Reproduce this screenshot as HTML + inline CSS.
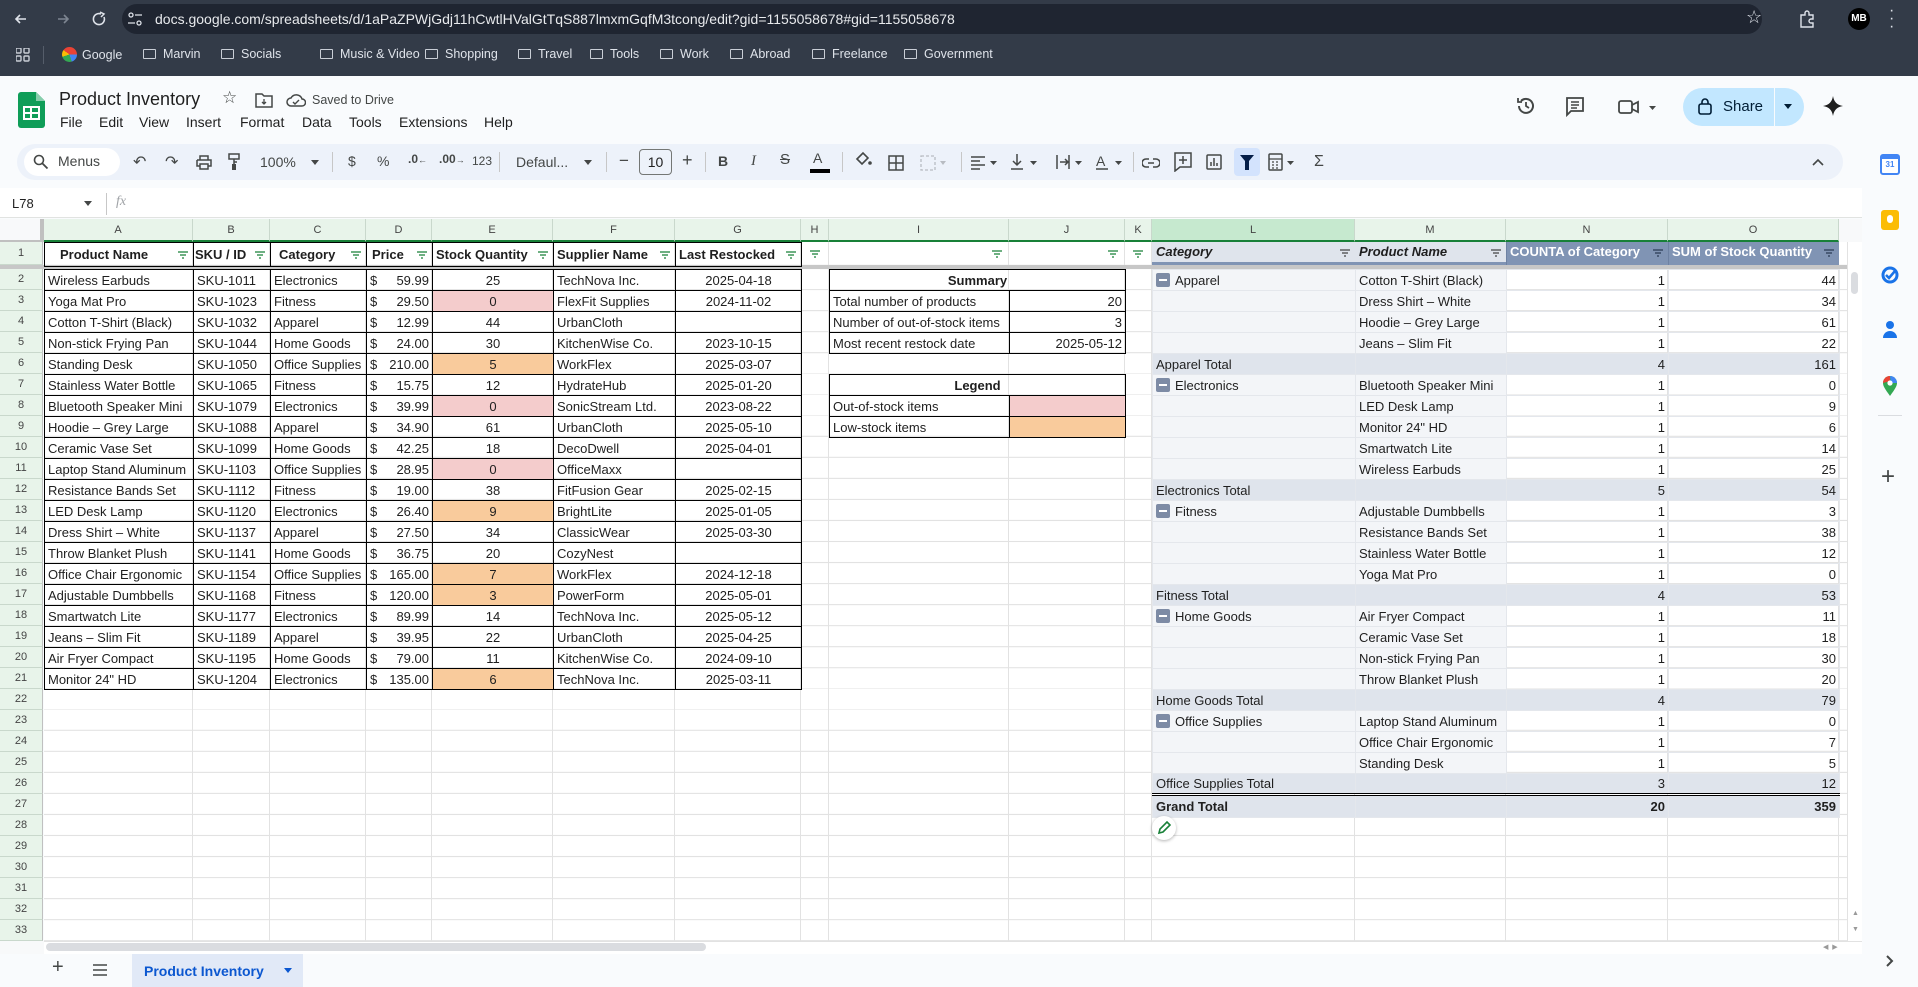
<!DOCTYPE html>
<html><head><meta charset="utf-8">
<style>
*{box-sizing:border-box;margin:0;padding:0}
body{width:1918px;height:987px;overflow:hidden;position:relative;background:#f9fbfd;font-family:"Liberation Sans",Arial,sans-serif;color:#1f1f1f}
.a{position:absolute}
.chrome{left:0;top:0;width:1918px;height:76px;background:#333b48}
.url{left:122px;top:4px;width:1640px;height:30px;background:#1f2531;border-radius:15px}
.bm{top:47px;font-size:12.5px;color:#dfe3ea;white-space:nowrap}
.fold{display:inline-block;width:13px;height:10px;border:1.5px solid #c9ced6;border-radius:1px;margin-right:7px;vertical-align:-1px}
.mn{top:114px;font-size:14px;color:#1f1f1f}
.tb{left:17px;top:144px;width:1826px;height:36px;background:#edf2fa;border-radius:18px}
.ti{top:152px;font-size:13px;color:#444746}
.sep{top:152px;width:1px;height:20px;background:#c7c7c7}
.grid{left:44px;top:242px;width:1803px;height:699px;background:#fff}
.vl{top:242px;width:1px;height:699px;background:#e2e2e2}
.colh{top:219px;height:23px;background:#e8f4ea;border-right:1px solid #c9d8cc;border-bottom:2px solid #188038;font-size:11px;color:#444;text-align:center;line-height:22px}
.rowh{left:0;width:43px;height:21px;background:#e8f4ea;border-bottom:1px solid #c9d8cc;border-right:1px solid #c0c0c0;font-size:11px;color:#444;text-align:center;line-height:20px}
table{border-collapse:collapse;table-layout:fixed;position:absolute;font-size:13px}
td{height:21px;padding:0 3px;white-space:nowrap;overflow:hidden;line-height:19px}
.dt td{border:1px solid #000}
.hd td{border:1px solid #000;font-weight:bold;height:24px;text-align:center;position:relative}
.c{text-align:center}.r{text-align:right}
.pk{background:#f4cccc}.or{background:#f9cb9c}
.pr{display:flex;justify-content:space-between}
.fi{position:absolute;right:4px;top:7px}
.pv td{border:1px solid #e4e7ec;color:#1f1f1f}
.pv .g{background:#f3f5f8}
.pv .t td{background:#dfe4ec}
.pv .gt td{background:#dfe4ec;font-weight:bold;border-top:3px double #000}
.mb{display:inline-block;width:14px;height:14px;background:#7d8ba5;border-radius:2px;vertical-align:-2px;margin-right:5px;position:relative}
.mb:after{content:"";position:absolute;left:3px;top:6px;width:8px;height:2px;background:#fff}
.side{left:1862px;top:76px;width:56px;height:911px;background:#f9fbfd}
</style></head><body>

<div class="a chrome"></div>
<div class="a url"></div>
<svg class="a" style="left:12px;top:10px" width="100" height="18"><path d="M14 9H4m4-4-4 4 4 4" stroke="#dfe3ea" stroke-width="1.6" fill="none"/><path d="M46 9h10m-4-4 4 4-4 4" stroke="#7d8591" stroke-width="1.6" fill="none"/><path d="M89 4a5.5 5.5 0 1 0 3 3" stroke="#dfe3ea" stroke-width="1.6" fill="none"/><path d="M88 2l4 2-3 3" stroke="#dfe3ea" stroke-width="1.5" fill="none"/></svg>
<svg class="a" style="left:127px;top:11px" width="16" height="16"><circle cx="4" cy="4" r="2" stroke="#dfe3ea" fill="none" stroke-width="1.3"/><path d="M8 4h7M1 12h7" stroke="#dfe3ea" stroke-width="1.3"/><circle cx="12" cy="12" r="2" stroke="#dfe3ea" fill="none" stroke-width="1.3"/></svg>
<div class="a" style="left:155px;top:11px;font-size:14px;color:#e8eaed">docs.google.com/spreadsheets/d/1aPaZPWjGdj11hCwtlHValGtTqS887lmxmGqfM3tcong/edit?gid=1155058678#gid=1155058678</div>
<div class="a" style="left:1746px;top:7px;font-size:18px;color:#dfe3ea">☆</div>
<svg class="a" style="left:1798px;top:10px" width="18" height="18"><path d="M3 5h4V3a2 2 0 0 1 4 0v2h4v4h-2a2 2 0 0 0 0 4h2v4H3z" stroke="#dfe3ea" fill="none" stroke-width="1.4"/></svg>
<div class="a" style="left:1848px;top:8px;width:22px;height:22px;border-radius:50%;background:#000;color:#fff;font-size:10px;font-weight:bold;text-align:center;line-height:22px">MB</div>
<div class="a" style="left:1889px;top:7px;color:#dfe3ea;font-size:16px;line-height:8px">·<br>·<br>·</div>

<svg class="a" style="left:16px;top:48px" width="14" height="14"><g><rect x="0" y="0" width="5" height="5" rx="1" fill="none" stroke="#c9ced6" stroke-width="1.4"/><rect x="8" y="0" width="5" height="5" rx="1" fill="none" stroke="#c9ced6" stroke-width="1.4"/><rect x="0" y="8" width="5" height="5" rx="1" fill="none" stroke="#c9ced6" stroke-width="1.4"/><rect x="8" y="8" width="5" height="5" rx="1" fill="none" stroke="#c9ced6" stroke-width="1.4"/></g></svg>
<div class="a" style="left:43px;top:46px;width:1px;height:18px;background:#555d6a"></div>
<div class="a bm" style="left:62px"><span style="display:inline-block;width:15px;height:15px;border-radius:50%;background:conic-gradient(#ea4335 0 25%,#4285f4 25% 45%,#34a853 45% 70%,#fbbc05 70% 85%,#ea4335 85%);vertical-align:-3px;margin-right:5px"></span>Google</div>
<div class="a bm" style="left:143px"><span class="fold"></span>Marvin</div>
<div class="a bm" style="left:221px"><span class="fold"></span>Socials</div>
<div class="a bm" style="left:320px"><span class="fold"></span>Music &amp; Video</div>
<div class="a bm" style="left:425px"><span class="fold"></span>Shopping</div>
<div class="a bm" style="left:518px"><span class="fold"></span>Travel</div>
<div class="a bm" style="left:590px"><span class="fold"></span>Tools</div>
<div class="a bm" style="left:660px"><span class="fold"></span>Work</div>
<div class="a bm" style="left:730px"><span class="fold"></span>Abroad</div>
<div class="a bm" style="left:812px"><span class="fold"></span>Freelance</div>
<div class="a bm" style="left:904px"><span class="fold"></span>Government</div>

<svg class="a" style="left:18px;top:92px" width="27" height="36"><path d="M0 3a3 3 0 0 1 3-3h15l9 9v24a3 3 0 0 1-3 3H3a3 3 0 0 1-3-3z" fill="#0f9d58"/><path d="M18 0v9h9z" fill="#87ceac"/><rect x="6" y="15" width="15" height="12" fill="none" stroke="#fff" stroke-width="2"/><path d="M6 21h15M13 15v12" stroke="#fff" stroke-width="2"/></svg>
<div class="a" style="left:59px;top:89px;font-size:18px;color:#1f1f1f">Product Inventory</div>
<div class="a" style="left:222px;top:88px;font-size:17px;color:#444746">☆</div>
<svg class="a" style="left:255px;top:92px" width="18" height="16"><path d="M1 2h6l2 2h8v11H1z" stroke="#444746" fill="none" stroke-width="1.5"/><path d="M9 7v5M7 10l2 2 2-2" stroke="#444746" fill="none" stroke-width="1.3"/></svg>
<svg class="a" style="left:286px;top:93px" width="20" height="15"><path d="M5 13a4 4 0 0 1 0-8 6 6 0 0 1 11 1 3.5 3.5 0 0 1 0 7z" stroke="#444746" fill="none" stroke-width="1.5"/><path d="M7 9l2 2 4-4" stroke="#444746" fill="none" stroke-width="1.4"/></svg>
<div class="a" style="left:312px;top:93px;font-size:12.5px;color:#444746">Saved to Drive</div>
<div class="a mn" style="left:60px">File</div>
<div class="a mn" style="left:99px">Edit</div>
<div class="a mn" style="left:139px">View</div>
<div class="a mn" style="left:186px">Insert</div>
<div class="a mn" style="left:240px">Format</div>
<div class="a mn" style="left:302px">Data</div>
<div class="a mn" style="left:349px">Tools</div>
<div class="a mn" style="left:399px">Extensions</div>
<div class="a mn" style="left:484px">Help</div>

<svg class="a" style="left:1515px;top:95px" width="22" height="22"><path d="M4 11a7 7 0 1 0 2-5" stroke="#444746" fill="none" stroke-width="2"/><path d="M3 3v4h4" stroke="#444746" fill="none" stroke-width="1.8"/><path d="M11 7v4l3 2" stroke="#444746" fill="none" stroke-width="1.8"/></svg>
<svg class="a" style="left:1565px;top:96px" width="20" height="22"><path d="M2 2h16v13H6l-4 4z" stroke="#444746" fill="none" stroke-width="1.8"/><path d="M6 6h8M6 9h8M6 12h6" stroke="#444746" stroke-width="1.5"/></svg>
<svg class="a" style="left:1618px;top:99px" width="44" height="16"><rect x="1" y="2" width="13" height="12" rx="2" stroke="#444746" fill="none" stroke-width="1.8"/><path d="M14 6l6-3v10l-6-3" stroke="#444746" fill="none" stroke-width="1.8"/><path d="M31 7h7l-3.5 4z" fill="#444746"/></svg>
<div class="a" style="left:1683px;top:88px;width:121px;height:38px;background:#c2e7ff;border-radius:19px"></div>
<svg class="a" style="left:1698px;top:97px" width="14" height="18"><rect x="1" y="7" width="12" height="10" rx="2" stroke="#001d35" fill="none" stroke-width="1.6"/><path d="M4 7V5a3 3 0 0 1 6 0v2" stroke="#001d35" fill="none" stroke-width="1.6"/></svg>
<div class="a" style="left:1723px;top:98px;font-size:15px;color:#001d35">Share</div>
<div class="a" style="left:1774px;top:88px;width:1px;height:38px;background:#f9fbfd"></div>
<svg class="a" style="left:1784px;top:104px" width="10" height="6"><path d="M0 0h8l-4 5z" fill="#001d35"/></svg>
<svg class="a" style="left:1823px;top:96px" width="20" height="20"><path d="M10 0C11 6 14 9 20 10 14 11 11 14 10 20 9 14 6 11 0 10 6 9 9 6 10 0z" fill="#1f1f1f"/></svg>
<div class="a" style="left:1865px;top:91px;width:32px;height:32px;border-radius:50%;background:#000;color:#fff;font-size:13px;font-weight:bold;text-align:center;line-height:32px">MB</div>

<div class="a tb"></div>
<div class="a" style="left:24px;top:148px;width:96px;height:28px;background:#fff;border-radius:14px"></div>
<svg class="a" style="left:33px;top:154px" width="16" height="16"><circle cx="6" cy="6" r="4.5" stroke="#444746" fill="none" stroke-width="1.6"/><path d="M9.5 9.5l5 5" stroke="#444746" stroke-width="1.8"/></svg>
<div class="a ti" style="left:58px;top:153px;font-size:14px">Menus</div>
<div class="a ti" style="left:133px;font-size:16px">↶</div>
<div class="a ti" style="left:165px;font-size:16px">↷</div>
<svg class="a" style="left:196px;top:155px" width="16" height="15"><path d="M4 5V1h8v4M1 5h14v6h-3M4 11H1V5" stroke="#444746" fill="none" stroke-width="1.5"/><rect x="4" y="9" width="8" height="5" stroke="#444746" fill="none" stroke-width="1.5"/></svg>
<svg class="a" style="left:228px;top:153px" width="12" height="18"><rect x="1" y="1" width="10" height="5" stroke="#444746" fill="none" stroke-width="1.5"/><path d="M6 6v3h3M6 9v8" stroke="#444746" fill="none" stroke-width="1.5"/><rect x="4" y="11" width="4" height="6" fill="#444746"/></svg>
<div class="a ti" style="left:260px;top:154px;font-size:14px">100%</div>
<svg class="a" style="left:311px;top:160px" width="8" height="5"><path d="M0 0h8l-4 5z" fill="#444746"/></svg>
<div class="a sep" style="left:332px"></div>
<div class="a ti" style="left:348px;top:153px;font-size:14px">$</div>
<div class="a ti" style="left:377px;top:153px;font-size:14px">%</div>
<div class="a ti" style="left:408px;top:152px;font-size:12px;font-weight:bold">.0<span style="font-size:9px">←</span></div>
<div class="a ti" style="left:439px;top:152px;font-size:12px;font-weight:bold">.00<span style="font-size:9px">→</span></div>
<div class="a ti" style="left:472px;top:154px;font-size:12px">123</div>
<div class="a sep" style="left:499px"></div>
<div class="a ti" style="left:516px;top:154px;font-size:14px">Defaul...</div>
<svg class="a" style="left:584px;top:160px" width="8" height="5"><path d="M0 0h8l-4 5z" fill="#444746"/></svg>
<div class="a sep" style="left:606px"></div>
<div class="a ti" style="left:619px;top:151px;font-size:17px">−</div>
<div class="a" style="left:639px;top:149px;width:33px;height:26px;border:1px solid #747775;border-radius:4px;font-size:14px;text-align:center;line-height:24px;color:#1f1f1f">10</div>
<div class="a ti" style="left:682px;top:150px;font-size:18px">+</div>
<div class="a sep" style="left:705px"></div>
<div class="a ti" style="left:718px;top:153px;font-size:14px;font-weight:bold">B</div>
<div class="a ti" style="left:751px;top:153px;font-size:15px;font-style:italic;font-family:'Liberation Serif',serif">I</div>
<div class="a ti" style="left:780px;top:151px;font-size:15px;text-decoration:line-through">S</div>
<div class="a ti" style="left:813px;top:150px;font-size:14px">A</div>
<div class="a" style="left:810px;top:169px;width:20px;height:4px;background:#000"></div>
<div class="a sep" style="left:842px"></div>
<svg class="a" style="left:854px;top:151px" width="18" height="16"><path d="M3 8l6-6 5 5-6 6z" stroke="#444746" fill="none" stroke-width="1.6"/><circle cx="16" cy="12" r="1.8" fill="#444746"/></svg>
<svg class="a" style="left:888px;top:155px" width="16" height="16"><rect x="1" y="1" width="14" height="14" stroke="#444746" fill="none" stroke-width="1.5"/><path d="M8 1v14M1 8h14" stroke="#444746" stroke-width="1.5"/></svg>
<svg class="a" style="left:920px;top:155px" width="26" height="16"><rect x="1" y="1" width="14" height="14" stroke="#b8bcc2" fill="none" stroke-width="1.3" stroke-dasharray="3 2"/><path d="M20 6h6l-3 4z" fill="#b8bcc2"/></svg>
<div class="a sep" style="left:961px"></div>
<svg class="a" style="left:970px;top:155px" width="30" height="16"><path d="M1 2h14M1 6h9M1 10h14M1 14h9" stroke="#444746" stroke-width="1.5"/><path d="M20 6h7l-3.5 4z" fill="#444746"/></svg>
<svg class="a" style="left:1010px;top:153px" width="30" height="18"><path d="M7 1v11M3 8l4 4 4-4M1 16h12" stroke="#444746" fill="none" stroke-width="1.5"/><path d="M20 8h7l-3.5 4z" fill="#444746"/></svg>
<svg class="a" style="left:1055px;top:153px" width="30" height="18"><path d="M2 2v14M5 9h8M10 6l3 3-3 3M14 2v14" stroke="#444746" fill="none" stroke-width="1.5"/><path d="M20 8h7l-3.5 4z" fill="#444746"/></svg>
<svg class="a" style="left:1095px;top:153px" width="30" height="18"><text x="1" y="13" font-size="14" fill="#444746" font-family="Liberation Sans">A</text><path d="M1 16h12" stroke="#444746" stroke-width="1.5"/><path d="M20 8h7l-3.5 4z" fill="#444746"/></svg>
<div class="a sep" style="left:1133px"></div>
<svg class="a" style="left:1142px;top:157px" width="18" height="12"><path d="M7 2H4a4 4 0 0 0 0 8h3M11 2h3a4 4 0 0 1 0 8h-3M6 6h6" stroke="#444746" fill="none" stroke-width="1.6"/></svg>
<svg class="a" style="left:1174px;top:152px" width="18" height="20"><path d="M1 1h16v14H6l-5 4z" stroke="#444746" fill="none" stroke-width="1.5"/><path d="M9 4v8M5 8h8" stroke="#444746" stroke-width="1.5"/></svg>
<svg class="a" style="left:1206px;top:154px" width="16" height="16"><rect x="1" y="1" width="14" height="14" rx="1" stroke="#444746" fill="none" stroke-width="1.5"/><path d="M5 12V8M8 12V4M11 12V9" stroke="#444746" stroke-width="1.5"/></svg>
<div class="a" style="left:1234px;top:148px;width:26px;height:28px;background:#d3e3fd;border-radius:4px"></div>
<svg class="a" style="left:1240px;top:155px" width="14" height="15"><path d="M0 0h14L9 6v9H5V6z" fill="#041e49"/></svg>
<svg class="a" style="left:1268px;top:153px" width="30" height="18"><rect x="1" y="1" width="13" height="16" rx="1" stroke="#444746" fill="none" stroke-width="1.5"/><path d="M1 6h13M4 9h2M8 9h2M4 12h2M8 12h2M4 15h2M8 15h2" stroke="#444746" stroke-width="1.3"/><path d="M19 8h7l-3.5 4z" fill="#444746"/></svg>
<div class="a ti" style="left:1314px;top:153px;font-size:16px">Σ</div>
<svg class="a" style="left:1812px;top:158px" width="12" height="8"><path d="M1 7l5-5 5 5" stroke="#444746" fill="none" stroke-width="1.6"/></svg>

<div class="a" style="left:0;top:188px;width:1862px;height:30px;background:#fff;border-bottom:1px solid #e1e3e1"></div>
<div class="a" style="left:12px;top:196px;font-size:13px;color:#1f1f1f">L78</div>
<svg class="a" style="left:84px;top:201px" width="8" height="5"><path d="M0 0h8l-4 5z" fill="#444746"/></svg>
<div class="a" style="left:106px;top:193px;width:1px;height:22px;background:#c7c7c7"></div>
<div class="a" style="left:116px;top:194px;font-size:14px;color:#a0a3a7;font-style:italic;font-family:'Liberation Serif',serif">fx</div>

<div class="a grid"></div>
<div class="a" style="left:44px;top:264px;width:1803px;height:677px;background:repeating-linear-gradient(to bottom,#e2e2e2 0 1px,transparent 1px 21px) 0 4px"></div>
<div class="a vl" style="left:192px"></div><div class="a vl" style="left:269px"></div><div class="a vl" style="left:365px"></div><div class="a vl" style="left:431px"></div><div class="a vl" style="left:552px"></div><div class="a vl" style="left:674px"></div><div class="a vl" style="left:800px"></div><div class="a vl" style="left:828px"></div><div class="a vl" style="left:1008px"></div><div class="a vl" style="left:1124px"></div><div class="a vl" style="left:1151px"></div><div class="a vl" style="left:1354px"></div><div class="a vl" style="left:1505px"></div><div class="a vl" style="left:1667px"></div><div class="a vl" style="left:1838px"></div>

<div class="a" style="left:0;top:219px;width:44px;height:23px;background:#f8f9fa;border-right:4px solid #c0c0c0;border-bottom:2px solid #c0c0c0"></div>
<div class="a colh" style="left:44px;width:149px">A</div>
<div class="a colh" style="left:193px;width:77px">B</div>
<div class="a colh" style="left:270px;width:96px">C</div>
<div class="a colh" style="left:366px;width:66px">D</div>
<div class="a colh" style="left:432px;width:121px">E</div>
<div class="a colh" style="left:553px;width:122px">F</div>
<div class="a colh" style="left:675px;width:126px">G</div>
<div class="a colh" style="left:801px;width:28px">H</div>
<div class="a colh" style="left:829px;width:180px">I</div>
<div class="a colh" style="left:1009px;width:116px">J</div>
<div class="a colh" style="left:1125px;width:27px">K</div>
<div class="a colh" style="left:1152px;width:203px;background:#c6e9cf">L</div>
<div class="a colh" style="left:1355px;width:151px">M</div>
<div class="a colh" style="left:1506px;width:162px">N</div>
<div class="a colh" style="left:1668px;width:171px">O</div>
<div class="a" style="left:1839px;top:219px;width:23px;height:23px;background:#f8f9fa"></div>

<div class="a rowh" style="top:242px;height:23px;line-height:22px">1</div>
<div class="a" style="left:0;top:265px;width:1847px;height:4px;background:#c7c7c7"></div>
<div class="a rowh" style="top:269px">2</div><div class="a rowh" style="top:290px">3</div><div class="a rowh" style="top:311px">4</div><div class="a rowh" style="top:332px">5</div><div class="a rowh" style="top:353px">6</div><div class="a rowh" style="top:374px">7</div><div class="a rowh" style="top:395px">8</div><div class="a rowh" style="top:416px">9</div><div class="a rowh" style="top:437px">10</div><div class="a rowh" style="top:458px">11</div><div class="a rowh" style="top:479px">12</div><div class="a rowh" style="top:500px">13</div><div class="a rowh" style="top:521px">14</div><div class="a rowh" style="top:542px">15</div><div class="a rowh" style="top:563px">16</div><div class="a rowh" style="top:584px">17</div><div class="a rowh" style="top:605px">18</div><div class="a rowh" style="top:626px">19</div><div class="a rowh" style="top:647px">20</div><div class="a rowh" style="top:668px">21</div><div class="a rowh" style="top:689px">22</div><div class="a rowh" style="top:710px">23</div><div class="a rowh" style="top:731px">24</div><div class="a rowh" style="top:752px">25</div><div class="a rowh" style="top:773px">26</div><div class="a rowh" style="top:794px">27</div><div class="a rowh" style="top:815px">28</div><div class="a rowh" style="top:836px">29</div><div class="a rowh" style="top:857px">30</div><div class="a rowh" style="top:878px">31</div><div class="a rowh" style="top:899px">32</div><div class="a rowh" style="top:920px">33</div>

<table class="hd" style="left:44px;top:242px;width:757px">
<colgroup><col style="width:149px"><col style="width:77px"><col style="width:96px"><col style="width:66px"><col style="width:121px"><col style="width:122px"><col style="width:126px"></colgroup>
<tr>
<td style="text-align:left;padding-left:15px">Product Name<svg class="fi" width="12" height="10"><path d="M1 2h10M3 5h6M5 8h2" stroke="#188038" stroke-width="1.3"/></svg></td>
<td style="text-align:left;padding-left:1px">SKU / ID<svg class="fi" width="12" height="10"><path d="M1 2h10M3 5h6M5 8h2" stroke="#188038" stroke-width="1.3"/></svg></td>
<td style="text-align:left;padding-left:8px">Category<svg class="fi" width="12" height="10"><path d="M1 2h10M3 5h6M5 8h2" stroke="#188038" stroke-width="1.3"/></svg></td>
<td style="text-align:left;padding-left:5px">Price<svg class="fi" width="12" height="10"><path d="M1 2h10M3 5h6M5 8h2" stroke="#188038" stroke-width="1.3"/></svg></td>
<td style="text-align:left;padding-left:3px">Stock Quantity<svg class="fi" width="12" height="10"><path d="M1 2h10M3 5h6M5 8h2" stroke="#188038" stroke-width="1.3"/></svg></td>
<td style="text-align:left;padding-left:3px">Supplier Name<svg class="fi" width="12" height="10"><path d="M1 2h10M3 5h6M5 8h2" stroke="#188038" stroke-width="1.3"/></svg></td>
<td style="text-align:left;padding-left:3px">Last Restocked<svg class="fi" width="12" height="10"><path d="M1 2h10M3 5h6M5 8h2" stroke="#188038" stroke-width="1.3"/></svg></td>
</tr></table>
<svg class="a" style="left:809px;top:249px" width="12" height="10"><path d="M1 2h10M3 5h6M5 8h2" stroke="#188038" stroke-width="1.3"/></svg>
<svg class="a" style="left:991px;top:249px" width="12" height="10"><path d="M1 2h10M3 5h6M5 8h2" stroke="#188038" stroke-width="1.3"/></svg>
<svg class="a" style="left:1107px;top:249px" width="12" height="10"><path d="M1 2h10M3 5h6M5 8h2" stroke="#188038" stroke-width="1.3"/></svg>
<svg class="a" style="left:1132px;top:249px" width="12" height="10"><path d="M1 2h10M3 5h6M5 8h2" stroke="#188038" stroke-width="1.3"/></svg>

<table class="dt" style="left:44px;top:269px;width:757px">
<colgroup><col style="width:149px"><col style="width:77px"><col style="width:96px"><col style="width:66px"><col style="width:121px"><col style="width:122px"><col style="width:126px"></colgroup>
<tr><td>Wireless Earbuds</td><td>SKU-1011</td><td>Electronics</td><td><div class="pr"><span>$</span><span>59.99</span></div></td><td class="c">25</td><td>TechNova Inc.</td><td class="c">2025-04-18</td></tr>
<tr><td>Yoga Mat Pro</td><td>SKU-1023</td><td>Fitness</td><td><div class="pr"><span>$</span><span>29.50</span></div></td><td class="c pk">0</td><td>FlexFit Supplies</td><td class="c">2024-11-02</td></tr>
<tr><td>Cotton T-Shirt (Black)</td><td>SKU-1032</td><td>Apparel</td><td><div class="pr"><span>$</span><span>12.99</span></div></td><td class="c">44</td><td>UrbanCloth</td><td class="c"></td></tr>
<tr><td>Non-stick Frying Pan</td><td>SKU-1044</td><td>Home Goods</td><td><div class="pr"><span>$</span><span>24.00</span></div></td><td class="c">30</td><td>KitchenWise Co.</td><td class="c">2023-10-15</td></tr>
<tr><td>Standing Desk</td><td>SKU-1050</td><td>Office Supplies</td><td><div class="pr"><span>$</span><span>210.00</span></div></td><td class="c or">5</td><td>WorkFlex</td><td class="c">2025-03-07</td></tr>
<tr><td>Stainless Water Bottle</td><td>SKU-1065</td><td>Fitness</td><td><div class="pr"><span>$</span><span>15.75</span></div></td><td class="c">12</td><td>HydrateHub</td><td class="c">2025-01-20</td></tr>
<tr><td>Bluetooth Speaker Mini</td><td>SKU-1079</td><td>Electronics</td><td><div class="pr"><span>$</span><span>39.99</span></div></td><td class="c pk">0</td><td>SonicStream Ltd.</td><td class="c">2023-08-22</td></tr>
<tr><td>Hoodie – Grey Large</td><td>SKU-1088</td><td>Apparel</td><td><div class="pr"><span>$</span><span>34.90</span></div></td><td class="c">61</td><td>UrbanCloth</td><td class="c">2025-05-10</td></tr>
<tr><td>Ceramic Vase Set</td><td>SKU-1099</td><td>Home Goods</td><td><div class="pr"><span>$</span><span>42.25</span></div></td><td class="c">18</td><td>DecoDwell</td><td class="c">2025-04-01</td></tr>
<tr><td>Laptop Stand Aluminum</td><td>SKU-1103</td><td>Office Supplies</td><td><div class="pr"><span>$</span><span>28.95</span></div></td><td class="c pk">0</td><td>OfficeMaxx</td><td class="c"></td></tr>
<tr><td>Resistance Bands Set</td><td>SKU-1112</td><td>Fitness</td><td><div class="pr"><span>$</span><span>19.00</span></div></td><td class="c">38</td><td>FitFusion Gear</td><td class="c">2025-02-15</td></tr>
<tr><td>LED Desk Lamp</td><td>SKU-1120</td><td>Electronics</td><td><div class="pr"><span>$</span><span>26.40</span></div></td><td class="c or">9</td><td>BrightLite</td><td class="c">2025-01-05</td></tr>
<tr><td>Dress Shirt – White</td><td>SKU-1137</td><td>Apparel</td><td><div class="pr"><span>$</span><span>27.50</span></div></td><td class="c">34</td><td>ClassicWear</td><td class="c">2025-03-30</td></tr>
<tr><td>Throw Blanket Plush</td><td>SKU-1141</td><td>Home Goods</td><td><div class="pr"><span>$</span><span>36.75</span></div></td><td class="c">20</td><td>CozyNest</td><td class="c"></td></tr>
<tr><td>Office Chair Ergonomic</td><td>SKU-1154</td><td>Office Supplies</td><td><div class="pr"><span>$</span><span>165.00</span></div></td><td class="c or">7</td><td>WorkFlex</td><td class="c">2024-12-18</td></tr>
<tr><td>Adjustable Dumbbells</td><td>SKU-1168</td><td>Fitness</td><td><div class="pr"><span>$</span><span>120.00</span></div></td><td class="c or">3</td><td>PowerForm</td><td class="c">2025-05-01</td></tr>
<tr><td>Smartwatch Lite</td><td>SKU-1177</td><td>Electronics</td><td><div class="pr"><span>$</span><span>89.99</span></div></td><td class="c">14</td><td>TechNova Inc.</td><td class="c">2025-05-12</td></tr>
<tr><td>Jeans – Slim Fit</td><td>SKU-1189</td><td>Apparel</td><td><div class="pr"><span>$</span><span>39.95</span></div></td><td class="c">22</td><td>UrbanCloth</td><td class="c">2025-04-25</td></tr>
<tr><td>Air Fryer Compact</td><td>SKU-1195</td><td>Home Goods</td><td><div class="pr"><span>$</span><span>79.00</span></div></td><td class="c">11</td><td>KitchenWise Co.</td><td class="c">2024-09-10</td></tr>
<tr><td>Monitor 24" HD</td><td>SKU-1204</td><td>Electronics</td><td><div class="pr"><span>$</span><span>135.00</span></div></td><td class="c or">6</td><td>TechNova Inc.</td><td class="c">2025-03-11</td></tr>
</table>

<table class="dt" style="left:829px;top:269px;width:296px">
<colgroup><col style="width:180px"><col style="width:116px"></colgroup>
<tr><td colspan="2" class="c" style="font-weight:bold">Summary</td></tr>
<tr><td>Total number of products</td><td class="r">20</td></tr>
<tr><td>Number of out-of-stock items</td><td class="r">3</td></tr>
<tr><td>Most recent restock date</td><td class="r">2025-05-12</td></tr>
</table>
<table class="dt" style="left:829px;top:374px;width:296px">
<colgroup><col style="width:180px"><col style="width:116px"></colgroup>
<tr><td colspan="2" class="c" style="font-weight:bold">Legend</td></tr>
<tr><td>Out-of-stock items</td><td class="pk"></td></tr>
<tr><td>Low-stock items</td><td class="or"></td></tr>
</table>

<div class="a" style="left:1152px;top:242px;width:203px;height:23px;background:#dfe4ec;border-bottom:3px solid #8094b4;font:italic bold 13px 'Liberation Sans',sans-serif;line-height:19px;padding-left:4px">Category<svg class="a" style="right:4px;top:6px" width="12" height="10"><path d="M1 2h10M3 5h6M5 8h2" stroke="#444" stroke-width="1.3"/></svg></div>
<div class="a" style="left:1355px;top:242px;width:151px;height:23px;background:#dfe4ec;border-bottom:3px solid #8094b4;font:italic bold 13px 'Liberation Sans',sans-serif;line-height:19px;padding-left:4px">Product Name<svg class="a" style="right:4px;top:6px" width="12" height="10"><path d="M1 2h10M3 5h6M5 8h2" stroke="#444" stroke-width="1.3"/></svg></div>
<div class="a" style="left:1506px;top:242px;width:162px;height:23px;background:#8094b4;border-left:1px solid #6e82a3;font:bold 13px 'Liberation Sans',sans-serif;color:#fff;line-height:19px;padding-left:3px">COUNTA of Category<svg class="a" style="right:4px;top:6px" width="12" height="10"><path d="M1 2h10M3 5h6M5 8h2" stroke="#2b3a55" stroke-width="1.3"/></svg></div>
<div class="a" style="left:1668px;top:242px;width:171px;height:23px;background:#8094b4;border-left:1px solid #6e82a3;font:bold 13px 'Liberation Sans',sans-serif;color:#fff;line-height:19px;padding-left:3px">SUM of Stock Quantity<svg class="a" style="right:4px;top:6px" width="12" height="10"><path d="M1 2h10M3 5h6M5 8h2" stroke="#2b3a55" stroke-width="1.3"/></svg></div>

<table class="pv" style="left:1152px;top:269px;width:687px">
<colgroup><col style="width:203px"><col style="width:151px"><col style="width:162px"><col style="width:171px"></colgroup>
<tr><td class="g"><span class="mb"></span>Apparel</td><td class="g">Cotton T-Shirt (Black)</td><td class="r">1</td><td class="r">44</td></tr>
<tr><td class="g"></td><td class="g">Dress Shirt – White</td><td class="r">1</td><td class="r">34</td></tr>
<tr><td class="g"></td><td class="g">Hoodie – Grey Large</td><td class="r">1</td><td class="r">61</td></tr>
<tr><td class="g"></td><td class="g">Jeans – Slim Fit</td><td class="r">1</td><td class="r">22</td></tr>
<tr class="t"><td>Apparel Total</td><td></td><td class="r">4</td><td class="r">161</td></tr>
<tr><td class="g"><span class="mb"></span>Electronics</td><td class="g">Bluetooth Speaker Mini</td><td class="r">1</td><td class="r">0</td></tr>
<tr><td class="g"></td><td class="g">LED Desk Lamp</td><td class="r">1</td><td class="r">9</td></tr>
<tr><td class="g"></td><td class="g">Monitor 24" HD</td><td class="r">1</td><td class="r">6</td></tr>
<tr><td class="g"></td><td class="g">Smartwatch Lite</td><td class="r">1</td><td class="r">14</td></tr>
<tr><td class="g"></td><td class="g">Wireless Earbuds</td><td class="r">1</td><td class="r">25</td></tr>
<tr class="t"><td>Electronics Total</td><td></td><td class="r">5</td><td class="r">54</td></tr>
<tr><td class="g"><span class="mb"></span>Fitness</td><td class="g">Adjustable Dumbbells</td><td class="r">1</td><td class="r">3</td></tr>
<tr><td class="g"></td><td class="g">Resistance Bands Set</td><td class="r">1</td><td class="r">38</td></tr>
<tr><td class="g"></td><td class="g">Stainless Water Bottle</td><td class="r">1</td><td class="r">12</td></tr>
<tr><td class="g"></td><td class="g">Yoga Mat Pro</td><td class="r">1</td><td class="r">0</td></tr>
<tr class="t"><td>Fitness Total</td><td></td><td class="r">4</td><td class="r">53</td></tr>
<tr><td class="g"><span class="mb"></span>Home Goods</td><td class="g">Air Fryer Compact</td><td class="r">1</td><td class="r">11</td></tr>
<tr><td class="g"></td><td class="g">Ceramic Vase Set</td><td class="r">1</td><td class="r">18</td></tr>
<tr><td class="g"></td><td class="g">Non-stick Frying Pan</td><td class="r">1</td><td class="r">30</td></tr>
<tr><td class="g"></td><td class="g">Throw Blanket Plush</td><td class="r">1</td><td class="r">20</td></tr>
<tr class="t"><td>Home Goods Total</td><td></td><td class="r">4</td><td class="r">79</td></tr>
<tr><td class="g"><span class="mb"></span>Office Supplies</td><td class="g">Laptop Stand Aluminum</td><td class="r">1</td><td class="r">0</td></tr>
<tr><td class="g"></td><td class="g">Office Chair Ergonomic</td><td class="r">1</td><td class="r">7</td></tr>
<tr><td class="g"></td><td class="g">Standing Desk</td><td class="r">1</td><td class="r">5</td></tr>
<tr class="t"><td>Office Supplies Total</td><td></td><td class="r">3</td><td class="r">12</td></tr>
<tr class="gt" style="height:23px"><td>Grand Total</td><td></td><td class="r">20</td><td class="r">359</td></tr>
</table>

<div class="a" style="left:1152px;top:816px;width:24px;height:24px;border-radius:50%;background:#fff;box-shadow:0 1px 3px rgba(0,0,0,.3)"></div>
<svg class="a" style="left:1157px;top:821px" width="14" height="14"><path d="M2 12l1-4 7-7 3 3-7 7z" stroke="#188038" fill="none" stroke-width="1.6"/></svg>

<div class="a" style="left:1847px;top:242px;width:15px;height:699px;background:#fff;border-left:1px solid #e2e2e2"></div>
<div class="a" style="left:1851px;top:272px;width:7px;height:22px;background:#dadce0;border-radius:4px"></div>
<div class="a" style="left:1852px;top:910px;font-size:7px;color:#999">▲</div>
<div class="a" style="left:1852px;top:926px;font-size:7px;color:#999">▼</div>
<div class="a" style="left:44px;top:941px;width:1818px;height:13px;background:#fff;border-top:1px solid #e2e2e2"></div>
<div class="a" style="left:46px;top:943px;width:660px;height:8px;background:#dadce0;border-radius:4px"></div>
<div class="a" style="left:1823px;top:941px;font-size:7px;color:#999;line-height:13px">◀ &nbsp;▶</div>
<div class="a" style="left:0;top:941px;width:44px;height:13px;background:#f8f9fa"></div>

<div class="a" style="left:0;top:954px;width:1862px;height:33px;background:#f9fbfd"></div>
<div class="a" style="left:52px;top:956px;font-size:20px;color:#444746">+</div>
<svg class="a" style="left:93px;top:964px" width="14" height="12"><path d="M0 1h14M0 6h14M0 11h14" stroke="#444746" stroke-width="1.6"/></svg>
<div class="a" style="left:132px;top:954px;width:171px;height:33px;background:#e1e9f7"></div>
<div class="a" style="left:144px;top:963px;font-size:14px;font-weight:bold;color:#0b57d0">Product Inventory</div>
<svg class="a" style="left:284px;top:968px" width="8" height="5"><path d="M0 0h8l-4 5z" fill="#0b57d0"/></svg>

<div class="a side"></div>
<div class="a" style="left:1880px;top:154px;width:20px;height:21px;border-radius:3px;background:#fff;border:2px solid #4285f4;border-top:5px solid #4285f4;font-size:8px;text-align:center;color:#4285f4;line-height:12px;font-weight:bold">31</div>
<div class="a" style="left:1881px;top:210px;width:18px;height:20px;border-radius:3px;background:#fbbc04"></div>
<div class="a" style="left:1887px;top:215px;width:6px;height:8px;border-radius:3px;background:#fff"></div>
<svg class="a" style="left:1880px;top:265px" width="20" height="20"><circle cx="10" cy="10" r="7" stroke="#1a73e8" fill="none" stroke-width="3"/><path d="M6 10l3 3 6-7" stroke="#1a73e8" fill="none" stroke-width="2.5"/></svg>
<svg class="a" style="left:1882px;top:320px" width="16" height="20"><circle cx="8" cy="5" r="4" fill="#1a73e8"/><path d="M1 18a7 7 0 0 1 14 0z" fill="#1a73e8"/></svg>
<svg class="a" style="left:1882px;top:375px" width="16" height="22"><path d="M8 21C3 14 1 11 1 8a7 7 0 0 1 14 0c0 3-2 6-7 13z" fill="#34a853"/><path d="M1 8a7 7 0 0 1 7-7v5z" fill="#ea4335"/><path d="M8 1a7 7 0 0 1 7 7H9z" fill="#4285f4"/><circle cx="8" cy="8" r="2.6" fill="#fff"/></svg>
<div class="a" style="left:1878px;top:415px;width:24px;height:1px;background:#dadce0"></div>
<div class="a" style="left:1881px;top:463px;font-size:24px;color:#444746">+</div>
<svg class="a" style="left:1885px;top:954px" width="10" height="14"><path d="M2 2l5 5-5 5" stroke="#444746" fill="none" stroke-width="2"/></svg>
</body></html>
